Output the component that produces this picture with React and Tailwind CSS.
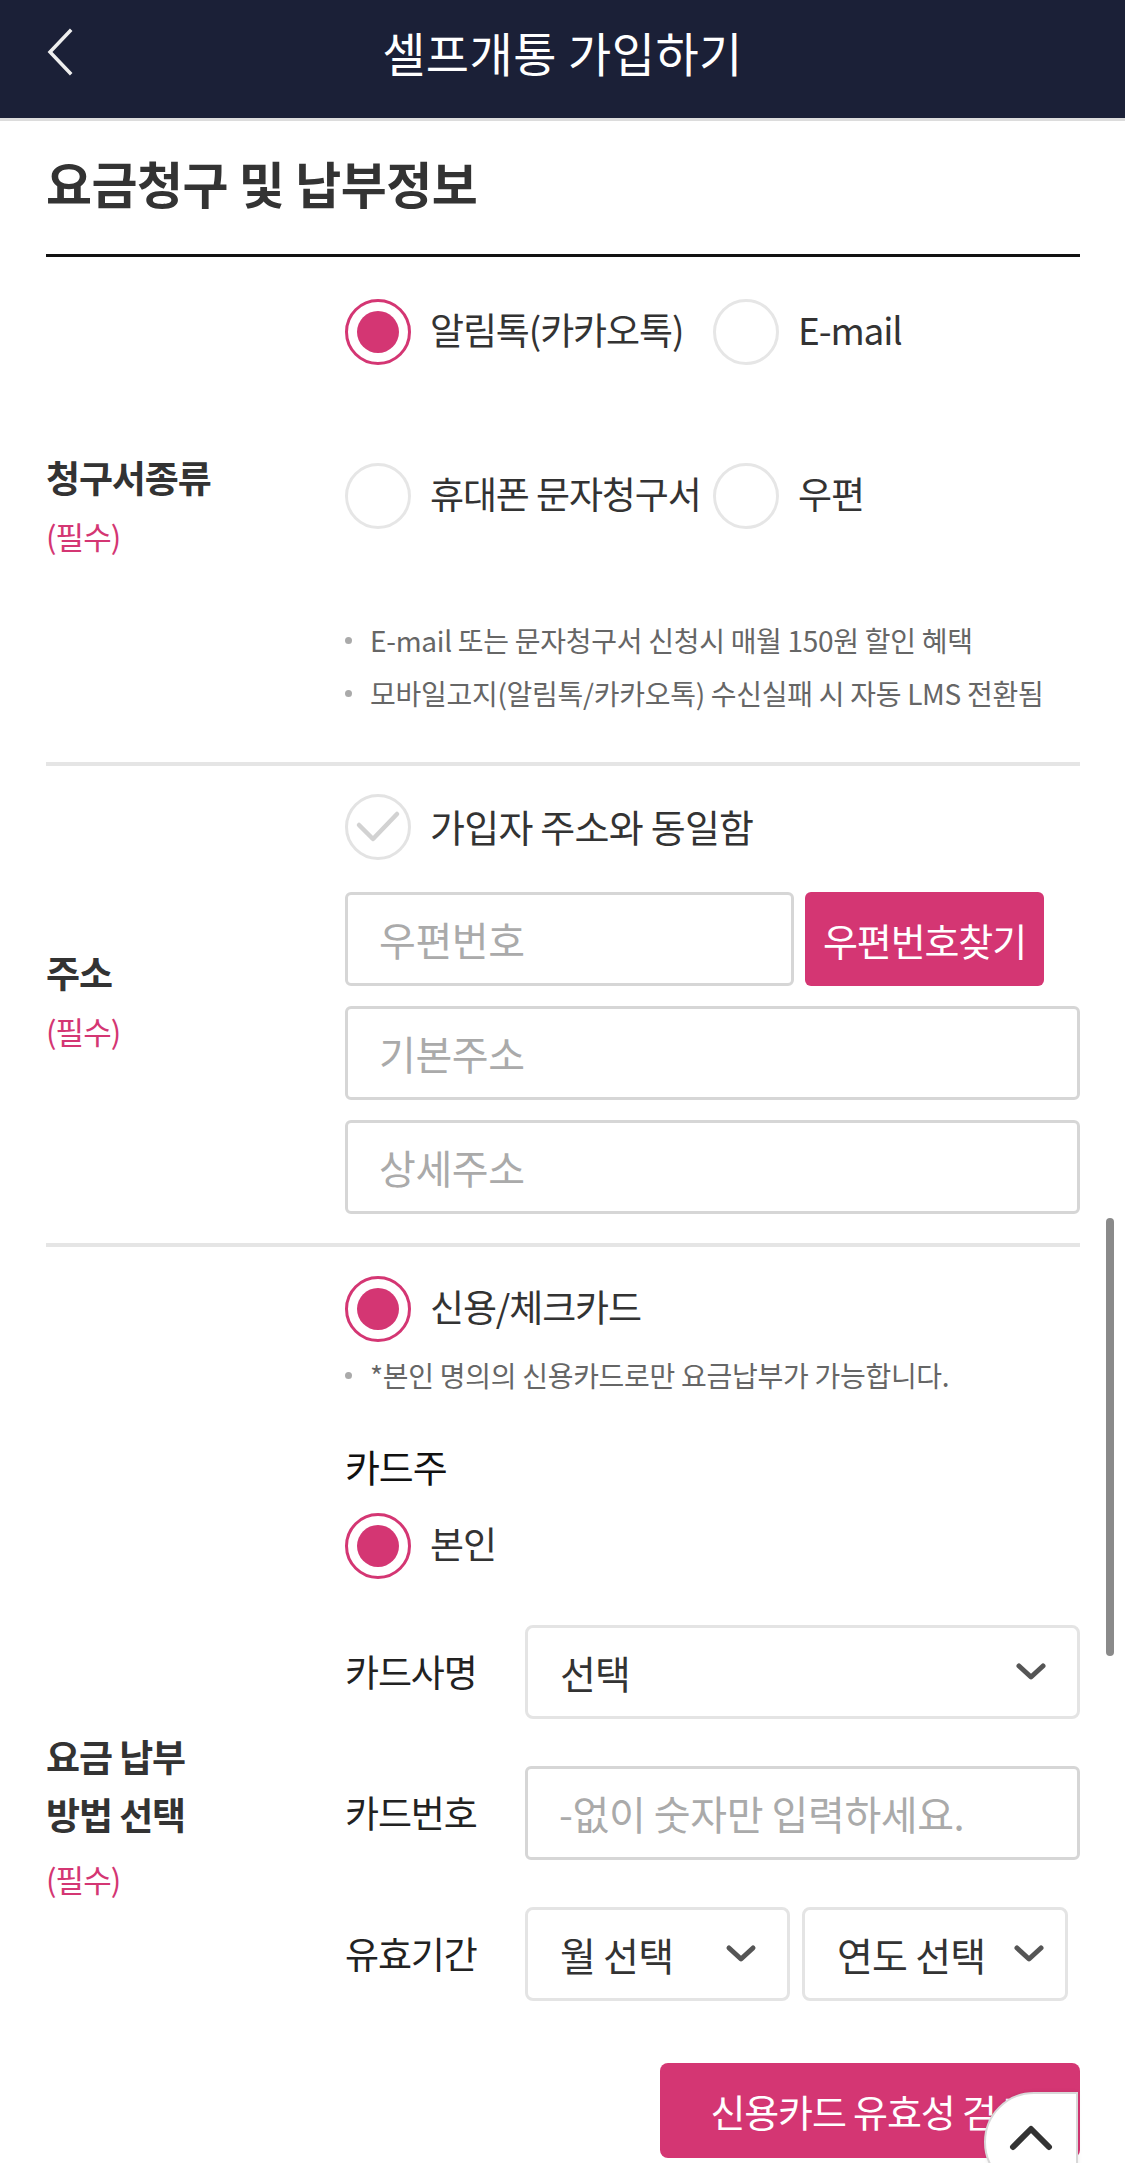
import React from "react";

function Radio({ checked }) {
  if (checked) {
    return (
      <span className="flex h-[66px] w-[66px] shrink-0 items-center justify-center rounded-full border-[3px] border-[#d43673] bg-white">
        <span className="h-[42px] w-[42px] rounded-full bg-[#d43673]" />
      </span>
    );
  }
  return <span className="h-[66px] w-[66px] shrink-0 rounded-full border-[3px] border-[#e6e6e6] bg-white" />;
}

function Option({ checked, label }) {
  return (
    <label className="flex items-center gap-[19px] whitespace-nowrap text-[37px] tracking-[-0.03em] text-[#333]">
      <Radio checked={checked} />
      <span className="-mt-[4px]">{label}</span>
    </label>
  );
}

function Check() {
  return (
    <span className="relative h-[66px] w-[66px] shrink-0 rounded-full border-[3px] border-[#e3e3e3] bg-white">
      <svg className="absolute left-[-3px] top-[-3px]" width="66" height="66" viewBox="0 0 66 66">
        <path d="M14 31 L28 45 L52 20" fill="none" stroke="#d2d2d2" strokeWidth="4.5" strokeLinecap="round" strokeLinejoin="round" />
      </svg>
    </span>
  );
}

function Chevron() {
  return (
    <svg width="32" height="20" viewBox="0 0 32 20" className="shrink-0">
      <path d="M4 4 L16 15 L28 4" fill="none" stroke="#555" strokeWidth="5" strokeLinecap="round" strokeLinejoin="round" />
    </svg>
  );
}

function Select({ text, className }) {
  return (
    <div className={`flex h-[94px] items-center justify-between rounded-[8px] border-[3px] border-[#e4e4e4] bg-white pl-[32px] pr-[30px] text-[39px] tracking-[-0.02em] text-[#333] ${className}`}>
      <span className="whitespace-nowrap">{text}</span>
      <Chevron />
    </div>
  );
}

function TextInput({ placeholder, className }) {
  return (
    <input
      placeholder={placeholder}
      className={`h-[94px] rounded-[6px] border-[3px] border-[#d6d6d6] bg-white px-[31px] text-[40px] tracking-[-0.01em] text-[#333] outline-none placeholder:text-[#aaa] ${className}`}
    />
  );
}

function SideLabel({ children }) {
  return (
    <div className="flex w-[299px] shrink-0 flex-col justify-center pb-[6px]">
      <div className="text-[37px] font-bold leading-[58px] tracking-[-0.03em] text-[#333]">{children}</div>
      <div className="mt-[1px] text-[31px] leading-[58px] tracking-[-0.03em] text-[#d43673]">(필수)</div>
    </div>
  );
}

function FieldRow({ label, children, className }) {
  return (
    <div className={`flex items-center ${className}`}>
      <span className="w-[180px] shrink-0 text-[37px] tracking-[-0.03em] text-[#222]">{label}</span>
      {children}
    </div>
  );
}

export default function App() {
  return (
    <div className="relative h-[2163px] overflow-hidden bg-white font-['Noto_Sans_CJK_KR',sans-serif] text-[#333]">
      <header className="grid h-[121px] grid-cols-[160px_1fr_160px] items-center border-b-[3px] border-[#dcdcdc] bg-[#1b2037] pb-[14px]">
        <button className="flex items-center pl-[46px]">
          <svg width="28" height="48" viewBox="0 0 28 48" className="shrink-0">
            <path d="M24 3 L4 24 L24 45" fill="none" stroke="#eeeeee" strokeWidth="3.5" strokeLinecap="square" />
          </svg>
        </button>
        <h1 className="text-center text-[47px] font-normal tracking-[0.01em] text-white">셀프개통 가입하기</h1>
        <span />
      </header>

      <main className="pl-[46px] pr-[45px]">
        <div className="flex h-[136px] items-center border-b-[3px] border-[#111] pb-[10px] text-[50px] font-bold tracking-[-0.01em] text-[#333]">
          요금청구 및 납부정보
        </div>

        <section className="flex border-b-[4px] border-[#e5e5e5]">
          <SideLabel>청구서종류</SideLabel>
          <div className="flex-1 pb-[42px] pt-[42px]">
            <div className="grid grid-cols-[368px_1fr]">
              <Option checked label="알림톡(카카오톡)" />
              <Option label="E-mail" />
            </div>
            <div className="mt-[98px] grid grid-cols-[368px_1fr]">
              <Option label="휴대폰 문자청구서" />
              <Option label="우편" />
            </div>
            <ul className="mt-[85px] text-[28px] leading-[53px] tracking-[-0.01em] text-[#666]">
              <li className="flex items-center whitespace-nowrap">
                <span className="mr-[18px] h-[7px] w-[7px] shrink-0 rounded-full bg-[#aaa]" />
                E-mail 또는 문자청구서 신청시 매월 150원 할인 혜택
              </li>
              <li className="flex items-center whitespace-nowrap">
                <span className="mr-[18px] h-[7px] w-[7px] shrink-0 rounded-full bg-[#aaa]" />
                모바일고지(알림톡/카카오톡) 수신실패 시 자동 LMS 전환됨
              </li>
            </ul>
          </div>
        </section>

        <section className="flex border-b-[4px] border-[#e5e5e5]">
          <SideLabel>주소</SideLabel>
          <div className="flex-1 pb-[29px] pt-[28px]">
            <label className="flex items-center gap-[19px] text-[38px] tracking-[-0.02em] text-[#333]">
              <Check />
              <span className="-mt-[4px]">가입자 주소와 동일함</span>
            </label>
            <div className="mt-[32px] flex flex-col gap-[20px]">
              <div className="flex">
                <TextInput placeholder="우편번호" className="w-[449px]" />
                <button className="ml-[11px] h-[94px] w-[239px] rounded-[6px] bg-[#d43673] text-[38px] tracking-[-0.03em] text-white">
                  우편번호찾기
                </button>
              </div>
              <TextInput placeholder="기본주소" className="w-full" />
              <TextInput placeholder="상세주소" className="w-full" />
            </div>
          </div>
        </section>

        <section className="flex">
          <div className="flex w-[299px] shrink-0 flex-col justify-center">
            <div className="text-[37px] font-bold leading-[58px] tracking-[-0.03em] text-[#333]">
              요금 납부
              <br />
              방법 선택
            </div>
            <div className="mt-[7px] text-[31px] leading-[58px] tracking-[-0.03em] text-[#d43673]">(필수)</div>
          </div>
          <div className="flex-1 pb-[230px] pt-[29px]">
            <Option checked label="신용/체크카드" />
            <p className="mt-[13px] flex items-center whitespace-nowrap text-[28px] leading-[40px] tracking-[-0.01em] text-[#666]">
              <span className="mr-[18px] h-[7px] w-[7px] shrink-0 rounded-full bg-[#aaa]" />
              *본인 명의의 신용카드로만 요금납부가 가능합니다.
            </p>
            <div className="mt-[46px] text-[38px] leading-[50px] tracking-[-0.03em] text-[#111]">카드주</div>
            <div className="mt-[22px]">
              <Option checked label="본인" />
            </div>

            <FieldRow label="카드사명" className="mt-[46px]">
              <Select text="선택" className="flex-1" />
            </FieldRow>
            <FieldRow label="카드번호" className="mt-[47px]">
              <TextInput placeholder="-없이 숫자만 입력하세요." className="min-w-0 flex-1" />
            </FieldRow>
            <FieldRow label="유효기간" className="mt-[47px]">
              <Select text="월 선택" className="w-[265px]" />
              <Select text="연도 선택" className="ml-[12px] w-[266px] !pr-[20px]" />
            </FieldRow>

            <div className="mt-[62px] flex justify-end">
              <button className="h-[95px] w-[420px] rounded-[8px] bg-[#d43673] text-[38px] tracking-[-0.03em] text-white">
                신용카드 유효성 검사
              </button>
            </div>
          </div>
        </section>
      </main>

      <div className="absolute left-[1106px] top-[1218px] h-[438px] w-[8px] rounded-full bg-[#8a8a8a]" />

      <button className="absolute left-[984px] top-[2092px] flex h-[100px] w-[94px] justify-center rounded-tl-[50px] rounded-bl-[50px] border-[2px] border-[#d8d8d8] bg-white pt-[30px] shadow-[0_0_4px_rgba(0,0,0,0.08)]">
        <svg width="46" height="28" viewBox="0 0 46 28">
          <path d="M5 23 L23 5 L41 23" fill="none" stroke="#333" strokeWidth="6" strokeLinecap="round" strokeLinejoin="round" />
        </svg>
      </button>
    </div>
  );
}
